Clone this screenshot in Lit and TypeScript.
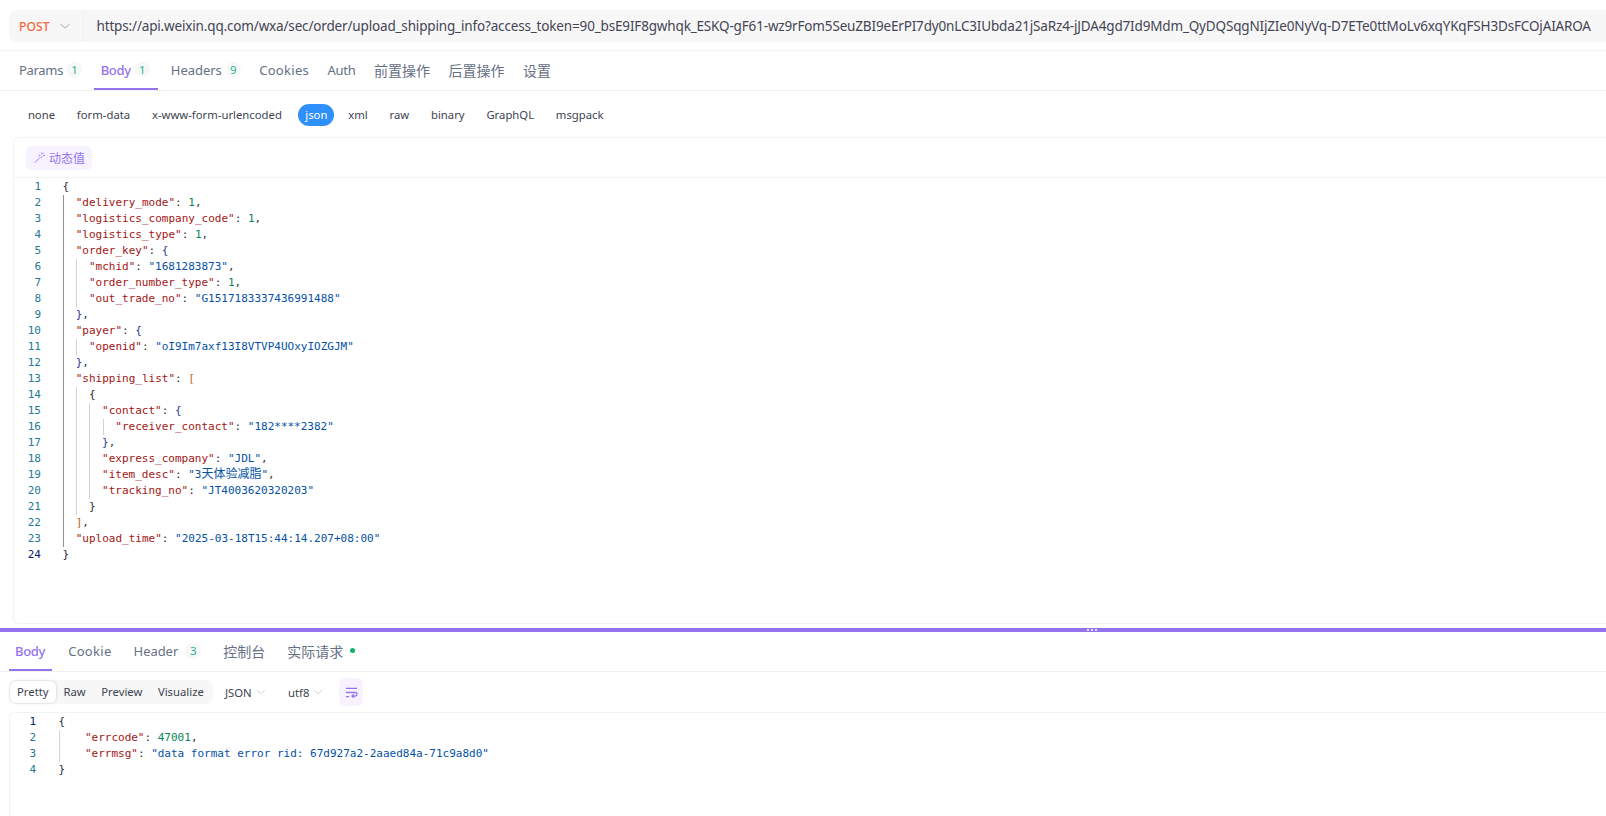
import { LitElement, html, css } from "lit";
import { customElement } from "lit/decorators.js";

type Tok = [string, string];
const k = (s: string): Tok => ["k", s];
const s = (t: string): Tok => ["s", t];
const z = (t: string): Tok => ["s zh", t];
const n = (t: string): Tok => ["n", t];
const p = (t: string): Tok => ["p", t];
const b1 = (t: string): Tok => ["b1", t];
const b2 = (t: string): Tok => ["b2", t];
const b3 = (t: string): Tok => ["b3", t];

// [indent level, tokens]
const REQ: [number, Tok[]][] = [
  [0, [b1("{")]],
  [1, [k('"delivery_mode"'), p(": "), n("1"), p(",")]],
  [1, [k('"logistics_company_code"'), p(": "), n("1"), p(",")]],
  [1, [k('"logistics_type"'), p(": "), n("1"), p(",")]],
  [1, [k('"order_key"'), p(": "), b2("{")]],
  [2, [k('"mchid"'), p(": "), s('"1681283873"'), p(",")]],
  [2, [k('"order_number_type"'), p(": "), n("1"), p(",")]],
  [2, [k('"out_trade_no"'), p(": "), s('"G1517183337436991488"')]],
  [1, [b2("}"), p(",")]],
  [1, [k('"payer"'), p(": "), b2("{")]],
  [2, [k('"openid"'), p(": "), s('"oI9Im7axf13I8VTVP4UOxyIOZGJM"')]],
  [1, [b2("}"), p(",")]],
  [1, [k('"shipping_list"'), p(": "), b3("[")]],
  [2, [b1("{")]],
  [3, [k('"contact"'), p(": "), b2("{")]],
  [4, [k('"receiver_contact"'), p(": "), s('"182****2382"')]],
  [3, [b2("}"), p(",")]],
  [3, [k('"express_company"'), p(": "), s('"JDL"'), p(",")]],
  [3, [k('"item_desc"'), p(": "), s('"3'), z("天体验减脂"), s('"'), p(",")]],
  [3, [k('"tracking_no"'), p(": "), s('"JT4003620320203"')]],
  [2, [b1("}")]],
  [1, [b3("]"), p(",")]],
  [1, [k('"upload_time"'), p(": "), s('"2025-03-18T15:44:14.207+08:00"')]],
  [0, [b1("}")]],
];

const RES: [number, Tok[]][] = [
  [0, [b1("{")]],
  [1, [k('"errcode"'), p(": "), n("47001"), p(",")]],
  [1, [k('"errmsg"'), p(": "), s('"data format error rid: 67d927a2-2aaed84a-71c9a8d0"')]],
  [0, [b1("}")]],
];

const URL_TEXT =
  "https://api.weixin.qq.com/wxa/sec/order/upload_shipping_info?access_token=90_bsE9IF8gwhqk_ESKQ-gF61-wz9rFom5SeuZBI9eErPI7dy0nLC3IUbda21jSaRz4-jJDA4gd7Id9Mdm_QyDQSqgNIjZIe0NyVq-D7ETe0ttMoLv6xqYKqFSH3DsFCOjAIAROA";

const chevron = html`<svg class="chev" viewBox="0 0 12 12"><path d="M1.5 4l4.5 4 4.5-4" fill="none" stroke="currentColor" stroke-width="1.1"/></svg>`;

interface CodeOpts {
  base: number;
  step: number;
  cur: number;
  activeGuide: boolean;
}

@customElement("app-root")
export class AppRoot extends LitElement {
  static styles = css`
    :host {
      display: block;
      width: 1606px;
      height: 816px;
      overflow: hidden;
      background: #fff;
      font-family: "Noto Sans", "Noto Sans CJK SC", sans-serif;
      color: #667085;
      font-size: 13px;
    }
    .page { display: flex; flex-direction: column; height: 816px; }
    .top { height: 628px; display: flex; flex-direction: column; flex: none; }
    .urlwrap { height: 51px; padding: 10px 0 0 9px; box-sizing: border-box; border-bottom: 1px solid #f2f2f2; flex: none; }
    .url { height: 32px; background: #f7f7f7; border-radius: 8px 0 0 8px; display: flex; align-items: center; }
    .method { width: 75px; height: 32px; display: flex; align-items: center; padding-left: 10px; box-sizing: border-box; color: #f5683a; font-size: 12.2px; font-weight: 500; gap: 9px; border-right: 1px solid #f0f0f0; flex: none; }
    .chev { width: 12px; height: 12px; color: #c4c4c4; flex: none; }
    .urltext { padding-left: 12.5px; font-size: 13.5px; color: #445; white-space: nowrap; letter-spacing: -0.16px; }
    .tabs { display: flex; border-bottom: 1px solid #f0f0f0; flex: none; }
    .t1 { height: 40px; padding-left: 12px; box-sizing: border-box; gap: 5.5px; }
    .tab { height: 100%; box-sizing: border-box; padding: 0 6px 0 7px; display: flex; align-items: center; gap: 4px; font-size: 13px; letter-spacing: -0.3px; color: #667085; border-bottom: 2px solid transparent; margin-bottom: -1px; white-space: nowrap; }
    .tab.cjk { font-size: 14px; letter-spacing: 0; }
    .tab.wide { letter-spacing: 0.3px; }
    .tab.mid { letter-spacing: -0.05px; }
    .tab.on { color: #9373ee; border-bottom-color: #9373ee; font-weight: 500; }
    .t1 .tab.on { padding-right: 8.5px; }
    .badge { width: 15px; height: 15px; border-radius: 50%; background: #f7f7f7; color: #1fb68f; font-size: 11.5px; letter-spacing: 0; display: flex; align-items: center; justify-content: center; font-weight: 400; }
    .modes { height: 46px; flex: none; display: flex; align-items: center; padding: 2px 0 0 17px; box-sizing: border-box; font-size: 11.3px; color: #3d4451; }
    .mode { padding: 0 10.9px; height: 22px; line-height: 22px; white-space: nowrap; }
    .mode.on { background: #2f90fb; color: #fff; border-radius: 11px; padding: 0 7px; margin: 0 3px 0 5.5px; }
    .box { flex: 1; margin: 0 0 4px 13px; border: 1px solid #f3f3f3; border-right: none; border-radius: 6px 0 0 6px; display: flex; flex-direction: column; min-height: 0; }
    .tool { height: 40px; flex: none; display: flex; align-items: center; padding-left: 12px; border-bottom: 1px solid #f3f3f3; box-sizing: border-box; }
    .dyn { height: 24px; width: 66px; box-sizing: border-box; background: #f6f2ff; border-radius: 6px; color: #9373ee; font-size: 12px; display: flex; align-items: center; justify-content: center; gap: 4px; padding-left: 1px; }
    .dyn svg { width: 11px; height: 11px; flex: none; }
    .code { font-family: "DejaVu Sans Mono", "Noto Sans CJK SC", monospace; font-size: 11px; line-height: 16px; padding-top: 1px; }
    .line { display: flex; height: 16px; white-space: pre; position: relative; }
    .num { flex: none; text-align: right; color: #237893; }
    .req .num { width: 27px; margin-right: 21.5px; }
    .res .num { width: 26px; margin-right: 22.5px; }
    .num.cur { color: #0b216f; }
    .txt { flex: none; }
    .zh { font-family: "Noto Sans CJK SC", sans-serif; font-size: 12px; line-height: 0; }
    .guide { position: absolute; top: 0; bottom: 0; width: 1px; background: #d3d3d3; }
    .guide.act { background: #939393; }
    .k { color: #a31515; } .s { color: #0451a5; } .n { color: #098658; } .p { color: #333; }
    .b1 { color: #2a2a3a; } .b2 { color: #1f3d8f; } .b3 { color: #b5651d; }
    .splitter { height: 4px; background: #9373ee; flex: none; display: flex; align-items: center; justify-content: center; gap: 2px; padding-left: 578px; box-sizing: border-box; }
    .splitter i { width: 2px; height: 2px; background: #e6def9; display: block; }
    .t2 { height: 40px; padding-left: 9px; box-sizing: border-box; gap: 10px; }
    .t2 .tab { padding: 0 6px; }
    .t2 .tab.on { padding-right: 7px; }
    .t2 .badge { margin-left: 3px; width: 16px; height: 16px; }
    .dot { width: 5px; height: 5px; border-radius: 50%; background: #10b368; margin-left: 3px; }
    .restool { height: 40px; flex: none; display: flex; align-items: center; padding-left: 9px; box-sizing: border-box; font-size: 11.3px; color: #3d4451; }
    .seg { display: flex; align-items: center; background: #f7f7f7; border-radius: 7px; height: 24px; width: 204px; padding: 0 0 0 1px; box-sizing: border-box; flex: none; }
    .seg span { padding: 0 7.8px; line-height: 22px; height: 22px; }
    .seg span.on { background: #fff; border-radius: 6px; box-shadow: 0 0 3px rgba(0,0,0,.18); padding: 0 7px; }
    .sel { display: flex; align-items: center; gap: 4px; flex: none; }
    .sel .chev { width: 10px; height: 10px; color: #ccc; }
    .s1 { margin-left: 12px; width: 63px; }
    .s2 { width: 51px; }
    .wrapbtn { width: 24px; height: 28px; border-radius: 6px; background: #f6f2ff; display: flex; align-items: center; justify-content: center; color: #9373ee; flex: none; }
    .wrapbtn svg { width: 13px; height: 13px; }
    .resbox { flex: 1; margin-left: 9px; border-left: 1px solid #f3f3f3; border-top: 1px solid #f3f3f3; border-radius: 6px 0 0 0; min-height: 0; }
  `;

  private renderLine(line: [number, Tok[]], i: number, opts: CodeOpts) {
    const [indent, toks] = line;
    return html`<div class="line">
      ${this.guides(indent, opts)}
      <span class="num ${i === opts.cur ? "cur" : ""}">${i + 1}</span>
      <span class="txt" style="padding-left:${indent * opts.step}px"
        >${toks.map(([c, t]) => html`<span class=${c}>${t}</span>`)}</span
      >
    </div>`;
  }

  private guides(indent: number, opts: CodeOpts) {
    const out = [];
    for (let g = 0; g < indent; g++) {
      const left = opts.base + g * opts.step;
      out.push(
        html`<span class="guide ${g === 0 && opts.activeGuide ? "act" : ""}" style="left:${left}px"></span>`
      );
    }
    return out;
  }

  render() {
    const reqOpts: CodeOpts = { base: 49, step: 13.2, cur: 23, activeGuide: true };
    const resOpts: CodeOpts = { base: 49, step: 26.4, cur: 0, activeGuide: false };
    return html`<div class="page">
      <div class="top">
        <div class="urlwrap">
          <div class="url">
            <div class="method">POST ${chevron}</div>
            <div class="urltext">${URL_TEXT}</div>
          </div>
        </div>
        <div class="tabs t1">
          <div class="tab">Params <span class="badge">1</span></div>
          <div class="tab on">Body <span class="badge">1</span></div>
          <div class="tab mid">Headers <span class="badge">9</span></div>
          <div class="tab wide">Cookies</div>
          <div class="tab">Auth</div>
          <div class="tab cjk">前置操作</div>
          <div class="tab cjk">后置操作</div>
          <div class="tab cjk">设置</div>
        </div>
        <div class="modes">
          ${["none", "form-data", "x-www-form-urlencoded"].map((m) => html`<div class="mode">${m}</div>`)}
          <div class="mode on">json</div>
          ${["xml", "raw", "binary", "GraphQL", "msgpack"].map((m) => html`<div class="mode">${m}</div>`)}
        </div>
        <div class="box">
          <div class="tool">
            <div class="dyn">
              <svg viewBox="0 0 12 12" fill="none" stroke="currentColor" stroke-width="1"><path d="M1 11.5L7 5.5"/><path d="M8.5 .5v2M8.5 5v1.5M10 3.8h2M5 3.8h2M10 2l1-1"/></svg>
              动态值
            </div>
          </div>
          <div class="code req">${REQ.map((l, i) => this.renderLine(l, i, reqOpts))}</div>
        </div>
      </div>
      <div class="splitter"><i></i><i></i><i></i></div>
      <div class="tabs t2">
        <div class="tab on">Body</div>
        <div class="tab wide">Cookie</div>
        <div class="tab mid">Header <span class="badge">3</span></div>
        <div class="tab cjk">控制台</div>
        <div class="tab cjk">实际请求 <span class="dot"></span></div>
      </div>
      <div class="restool">
        <div class="seg">
          <span class="on">Pretty</span><span>Raw</span><span>Preview</span><span>Visualize</span>
        </div>
        <div class="sel s1">JSON ${chevron}</div>
        <div class="sel s2">utf8 ${chevron}</div>
        <div class="wrapbtn">
          <svg viewBox="0 0 14 14" fill="none" stroke="currentColor" stroke-width="1.4"><path d="M1 2.5h12M1 7h10a1.9 1.9 0 010 3.8H7.5M9.5 9l-2 1.8 2 1.8M1 11.5h3.5"/></svg>
        </div>
      </div>
      <div class="resbox">
        <div class="code res">${RES.map((l, i) => this.renderLine(l, i, resOpts))}</div>
      </div>
    </div>`;
  }
}
